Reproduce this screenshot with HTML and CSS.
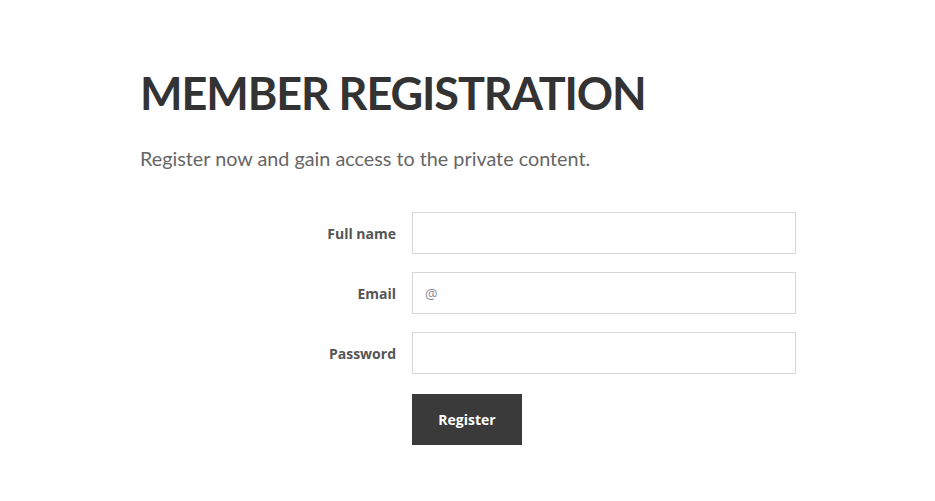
FILE: index.html
```html
<!DOCTYPE html>
<html>
<head>
<meta charset="utf-8">
<link rel="stylesheet" href="styles.css">
</head>
<body>
<main class="page">
  <h1 class="title">MEMBER REGISTRATION</h1>
  <p class="lead">Register now and gain access to the private content.</p>
  <form class="form">
    <div class="row">
      <label class="label">Full name</label>
      <input class="field" type="text">
    </div>
    <div class="row">
      <label class="label">Email</label>
      <input class="field" type="email" placeholder="@">
    </div>
    <div class="row">
      <label class="label">Password</label>
      <input class="field" type="password">
    </div>
    <div class="row row-submit">
      <span class="label"></span>
      <button class="btn" type="button">Register</button>
    </div>
  </form>
</main>
</body>
</html>
```
FILE: styles.css
```css
html, body {
  margin: 0;
  padding: 0;
  background: #fff;
}
body {
  font-family: "Lato", "Open Sans", sans-serif;
}
.page {
  padding: 64px 0 0 140px;
}
.title {
  margin: 0;
  font-family: "Lato", "Open Sans", sans-serif;
  font-weight: 700;
  font-size: 45px;
  line-height: 58px;
  color: #333333;
  letter-spacing: -1.1px;
}
.lead {
  margin: 24px 0 0 0;
  font-size: 19.8px;
  line-height: 24px;
  color: #666666;
}
.form {
  margin-top: 42px;
  display: flex;
  flex-direction: column;
  gap: 18px;
}
.row {
  display: flex;
  align-items: center;
}
.row-submit {
  margin-top: 2px;
}
.label {
  width: 256px;
  text-align: right;
  padding-right: 16px;
  font-family: "Open Sans", sans-serif;
  font-weight: 700;
  font-size: 14px;
  color: #555555;
}
.field {
  box-sizing: border-box;
  width: 384px;
  height: 42px;
  margin: 0;
  border: 1px solid #d6d6d6;
  border-radius: 0;
  padding: 0 12px;
  font-family: "Open Sans", sans-serif;
  font-size: 14px;
  color: #333;
  background: #fff;
  outline: none;
}
.field::placeholder {
  color: #8a8a9a;
}
.btn {
  width: 110px;
  height: 51px;
  border: none;
  background: #3a3a3a;
  color: #fff;
  font-family: "Open Sans", sans-serif;
  font-weight: 700;
  font-size: 14px;
  padding: 0;
}
```
